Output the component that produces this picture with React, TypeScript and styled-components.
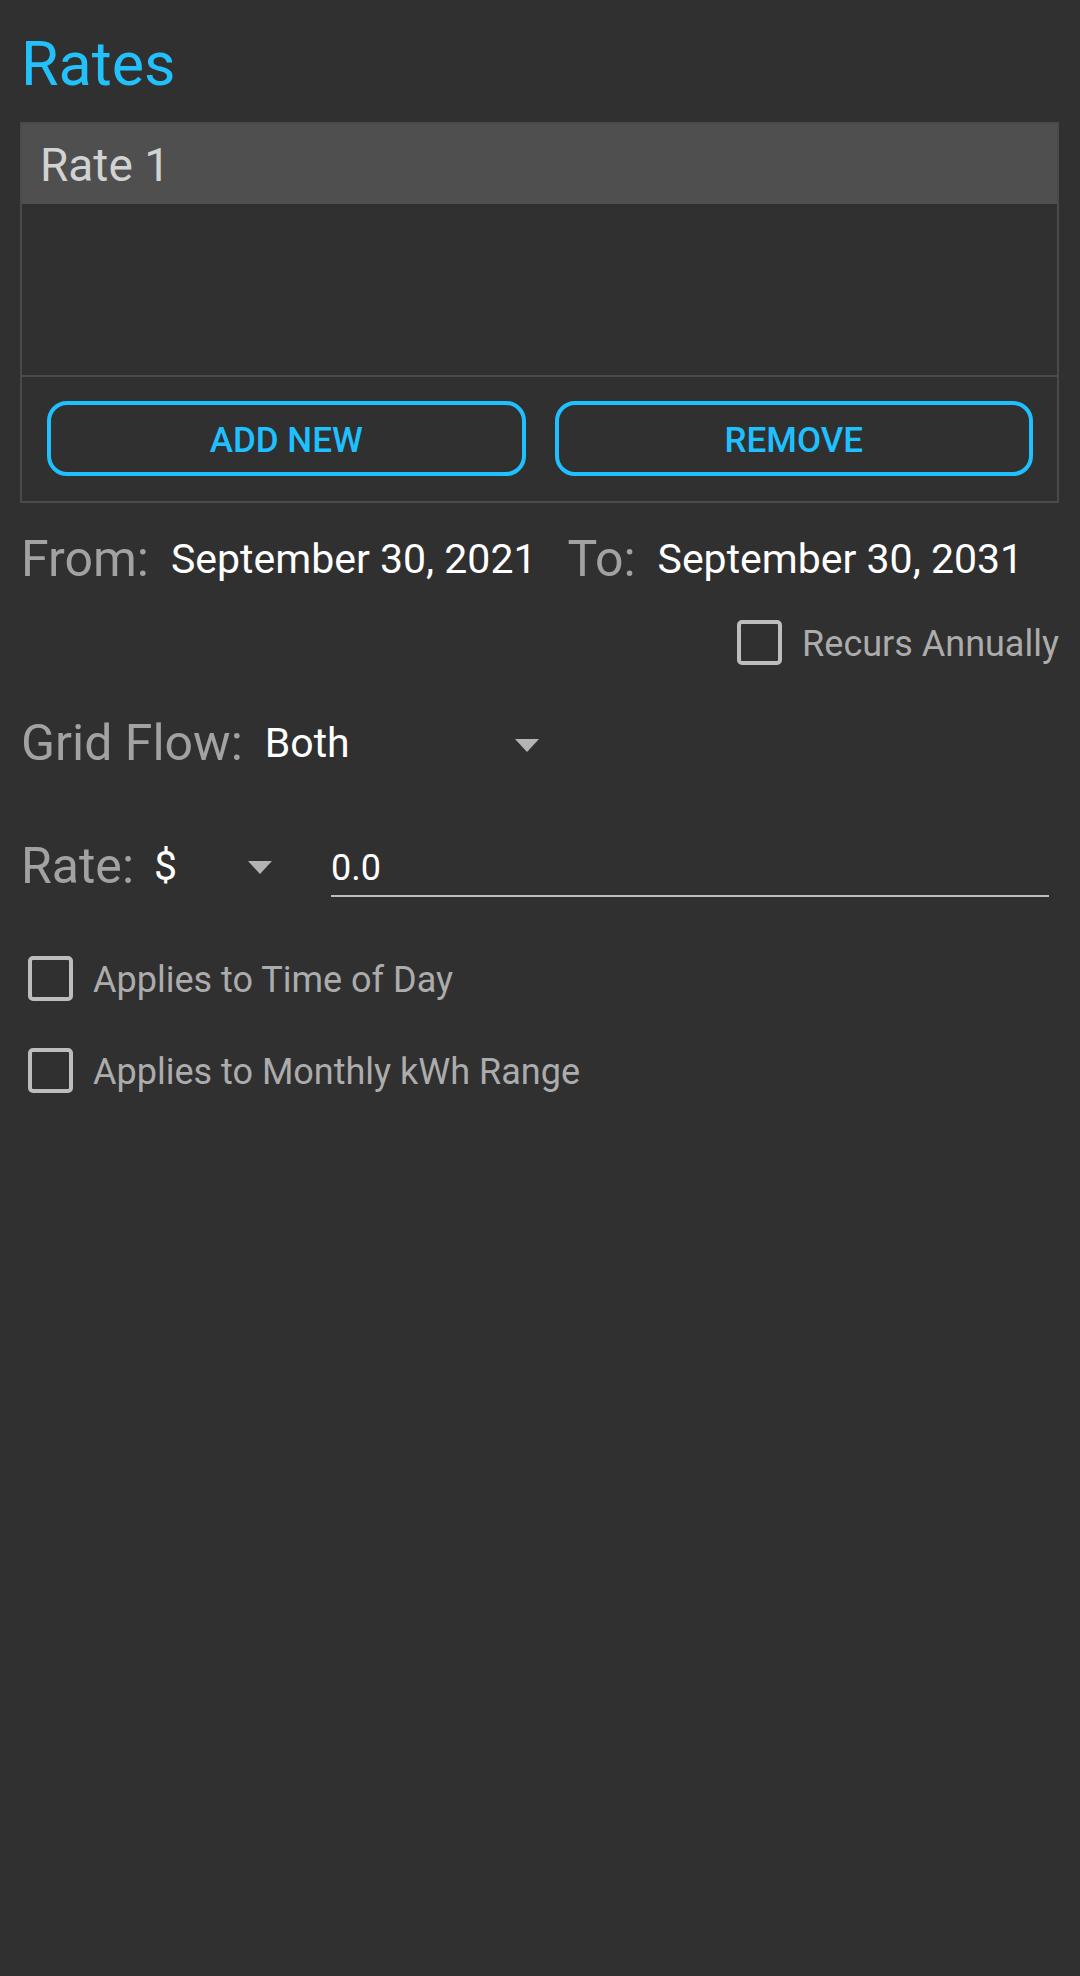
import styled, { createGlobalStyle } from 'styled-components';

const GlobalStyle = createGlobalStyle`
  html, body {
    margin: 0;
    padding: 0;
    background-color: #303030;
  }

  body {
    font-family: Roboto, 'Noto Sans', 'Liberation Sans', sans-serif;
    min-height: 1976px;
  }
`;

const Page = styled.div`
  display: flex;
  flex-direction: column;
  padding: 34px 21px 0 21px;
`;

const Title = styled.h1`
  margin: 0;
  font-size: 61px;
  line-height: 60px;
  font-weight: 400;
  color: #22c1fc;
`;

const Card = styled.div`
  margin-top: 28px;
  margin-left: -1px;
  border: 2px solid #4a4a4a;
  display: flex;
  flex-direction: column;
`;

const CardHeader = styled.div`
  height: 80px;
  padding: 2px 0 0 18px;
  box-sizing: border-box;
  background-color: #4f4f4f;
  color: #d2d2d2;
  font-size: 46px;
  line-height: 78px;
`;

const RateList = styled.div`
  height: 171px;
  border-bottom: 2px solid #4a4a4a;
`;

const Actions = styled.div`
  display: grid;
  grid-template-columns: 1fr 1fr;
  gap: 29px;
  padding: 24px 24px 25px 25px;
`;

const OutlineButton = styled.button`
  height: 75px;
  box-sizing: border-box;
  border: 4px solid #1fc0ff;
  border-radius: 20px;
  background: transparent;
  color: #1fc0ff;
  font-family: Roboto, sans-serif;
  font-size: 35px;
  font-weight: 500;
  padding: 4px 0 0;
  cursor: pointer;
`;

const Row = styled.div<{ $top: number; $height?: number }>`
  display: flex;
  align-items: center;
  margin-top: ${(p) => p.$top}px;
  height: ${(p) => p.$height ?? 60}px;
`;

const Label = styled.span<{ $gap?: number }>`
  font-size: 50px;
  line-height: 60px;
  color: #a2a2a2;
  margin-right: ${(p) => p.$gap ?? 22}px;
  white-space: nowrap;
`;

const Value = styled.span<{ $gap?: number }>`
  font-size: 41px;
  line-height: 60px;
  color: #ffffff;
  margin-right: ${(p) => p.$gap ?? 0}px;
  white-space: nowrap;
`;

const Select = styled.div<{ $width: number }>`
  display: flex;
  align-items: center;
  justify-content: space-between;
  width: ${(p) => p.$width}px;
  padding-right: 4px;
  box-sizing: border-box;
`;

const Arrow = styled.span`
  width: 0;
  height: 0;
  border-left: 12px solid transparent;
  border-right: 12px solid transparent;
  border-top: 13px solid #b4b4b4;
  margin-top: 4px;
`;

const RateField = styled.div`
  flex: 1;
  align-self: stretch;
  display: flex;
  align-items: center;
  margin: 0 10px 0 55px;
  padding-top: 6px;
  border-bottom: 2px solid #bdbdbd;
  font-size: 36px;
  color: #ffffff;
`;

const CheckRow = styled.label<{ $top: number; $right?: boolean }>`
  display: flex;
  align-items: center;
  justify-content: ${(p) => (p.$right ? 'flex-end' : 'flex-start')};
  margin-top: ${(p) => p.$top}px;
  margin-left: ${(p) => (p.$right ? 0 : 7)}px;
  gap: 20px;
  font-size: 36px;
  color: #acacac;
`;

const Box = styled.span`
  width: 45px;
  height: 45px;
  box-sizing: border-box;
  border: 4px solid #bdbdbd;
  border-radius: 5px;
  flex-shrink: 0;
`;

const CheckText = styled.span`
  padding-top: 4px;
`;

const App = () => {
  return (
    <>
      <GlobalStyle />
      <Page>
        <Title>Rates</Title>
        <Card>
          <CardHeader>Rate 1</CardHeader>
          <RateList />
          <Actions>
            <OutlineButton>ADD NEW</OutlineButton>
            <OutlineButton>REMOVE</OutlineButton>
          </Actions>
        </Card>

        <Row $top={26}>
          <Label>From:</Label>
          <Value $gap={31}>September 30, 2021</Value>
          <Label>To:</Label>
          <Value>September 30, 2031</Value>
        </Row>

        <CheckRow $top={30} $right>
          <Box />
          <CheckText>Recurs Annually</CheckText>
        </CheckRow>

        <Row $top={48}>
          <Label>Grid Flow:</Label>
          <Select $width={278}>
            <Value>Both</Value>
            <Arrow />
          </Select>
        </Row>

        <Row $top={61} $height={63}>
          <Label $gap={20}>Rate:</Label>
          <Select $width={122}>
            <Value>$</Value>
            <Arrow />
          </Select>
          <RateField>0.0</RateField>
        </Row>

        <CheckRow $top={58}>
          <Box />
          <CheckText>Applies to Time of Day</CheckText>
        </CheckRow>
        <CheckRow $top={46}>
          <Box />
          <CheckText>Applies to Monthly kWh Range</CheckText>
        </CheckRow>
      </Page>
    </>
  );
};

export default App;
